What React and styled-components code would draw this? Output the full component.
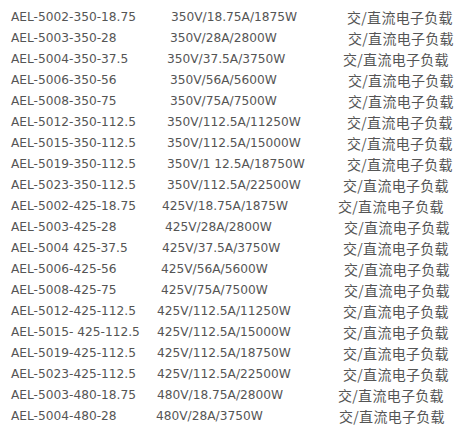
import React from 'react'
import styled, { createGlobalStyle } from 'styled-components'

const GlobalStyle = createGlobalStyle`
    html, body {
        margin: 0;
        padding: 0;
        background: #ffffff;
    }
`

const ListWrapper = styled.div`
    padding: 7px 0 0 11px;
    font-family: "DejaVu Sans", Verdana, sans-serif;
    font-size: 12.2px;
    color: #555555;
`

const Row = styled.div`
    display: grid;
    grid-template-columns: 145px 182px 1fr;
    height: 21px;
    line-height: 21px;
    white-space: nowrap;
`

const Model = styled.span`
`

const Spec = styled.span`
    padding-left: ${props => props.$indent}px;
`

const Kind = styled.span`
    padding-left: ${props => props.$indent}px;
    font-family: "Noto Sans CJK SC", "DejaVu Sans", sans-serif;
    font-size: 14px;
    letter-spacing: 0.3px;
`

// x offsets measured per line: the source text was spaced by hand
const rows = [
    ['AEL-5002-350-18.75', '350V/18.75A/1875W', 171, 347],
    ['AEL-5003-350-28', '350V/28A/2800W', 170, 348],
    ['AEL-5004-350-37.5', '350V/37.5A/3750W', 167, 343],
    ['AEL-5006-350-56', '350V/56A/5600W', 170, 348],
    ['AEL-5008-350-75', '350V/75A/7500W', 170, 348],
    ['AEL-5012-350-112.5', '350V/112.5A/11250W', 167, 347],
    ['AEL-5015-350-112.5', '350V/112.5A/15000W', 167, 347],
    ['AEL-5019-350-112.5', '350V/1 12.5A/18750W', 167, 347],
    ['AEL-5023-350-112.5', '350V/112.5A/22500W', 167, 343],
    ['AEL-5002-425-18.75', '425V/18.75A/1875W', 162, 338],
    ['AEL-5003-425-28', '425V/28A/2800W', 165, 344],
    ['AEL-5004 425-37.5', '425V/37.5A/3750W', 162, 343],
    ['AEL-5006-425-56', '425V/56A/5600W', 161, 344],
    ['AEL-5008-425-75', '425V/75A/7500W', 161, 344],
    ['AEL-5012-425-112.5', '425V/112.5A/11250W', 157, 343],
    ['AEL-5015- 425-112.5', '425V/112.5A/15000W', 157, 343],
    ['AEL-5019-425-112.5', '425V/112.5A/18750W', 157, 343],
    ['AEL-5023-425-112.5', '425V/112.5A/22500W', 157, 343],
    ['AEL-5003-480-18.75', '480V/18.75A/2800W', 157, 338],
    ['AEL-5004-480-28', '480V/28A/3750W', 156, 339],
]

const App = () => (
    <>
        <GlobalStyle />
        <ListWrapper>
            {rows.map(([model, spec, specX, kindX]) => (
                <Row key={model}>
                    <Model>{model}</Model>
                    <Spec $indent={specX - 156}>{spec}</Spec>
                    <Kind $indent={kindX - 338}>交/直流电子负载</Kind>
                </Row>
            ))}
        </ListWrapper>
    </>
)

export default App
